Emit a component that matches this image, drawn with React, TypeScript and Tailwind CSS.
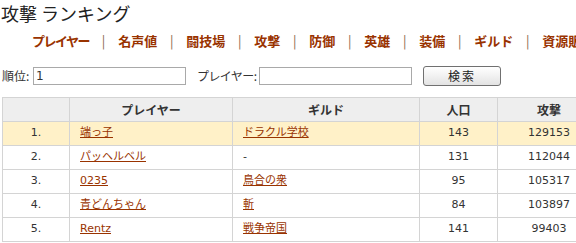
import React from 'react';

const navItems = ['プレイヤー', '名声値', '闘技場', '攻撃', '防御', '英雄', '装備', 'ギルド', '資源販売'];

const rows = [
  { rank: '1.', player: '端っ子', guild: 'ドラクル学校', pop: 143, attack: 129153 },
  { rank: '2.', player: 'パッヘルベル', guild: null, pop: 131, attack: 112044 },
  { rank: '3.', player: '0235', guild: '鳥合の衆', pop: 95, attack: 105317 },
  { rank: '4.', player: '青どんちゃん', guild: '斬', pop: 84, attack: 103897 },
  { rank: '5.', player: 'Rentz', guild: '戦争帝国', pop: 141, attack: 99403 },
];

function App() {
  return (
    <div className="w-[576px] h-[243px] overflow-hidden bg-white text-[#333] font-['Noto_Sans_CJK_JP',sans-serif]">
      {/* Title */}
      <h1 className="pl-[1px] pt-[2px] h-[33px] text-[18px] leading-[22px] font-normal text-[#222]">
        攻撃 ランキング
      </h1>

      {/* Nav */}
      <nav className="flex items-center h-[16px] pl-[32px] whitespace-nowrap text-[13px] leading-[16px] font-bold text-[#993300]">
        {navItems.map((item, i) => (
          <React.Fragment key={item}>
            {i > 0 && <span className="w-[29px] shrink-0 text-center font-normal text-[#8a6448]">|</span>}
            <a href="#" className={`shrink-0 ${i === 0 ? 'tracking-[-1.5px]' : ''}`}>{item}</a>
          </React.Fragment>
        ))}
      </nav>

      {/* Search */}
      <div className="flex items-center h-[20px] mt-[17px] text-[12px] whitespace-nowrap">
        <span className="w-[33px] pl-[2px] shrink-0">順位:</span>
        <input
          defaultValue="1"
          className="w-[153px] h-[18px] shrink-0 border border-[#a9a9a9] px-[2px] text-[12px] font-['DejaVu_Sans',sans-serif] outline-none"
        />
        <span className="w-[62px] ml-[11px] shrink-0 tracking-[-0.6px]">プレイヤー:</span>
        <input className="w-[153px] h-[18px] shrink-0 border border-[#a9a9a9] px-[2px] text-[12px] outline-none" />
        <button className="ml-[11px] w-[78px] h-[20px] shrink-0 rounded-[3px] border border-[#707070] bg-gradient-to-b from-white to-[#e3e3e3] text-[12px] leading-[18px] tracking-[2px] text-[#222]">
          検索
        </button>
      </div>

      {/* Table */}
      <table className="mt-[11px] ml-[2px] w-[598px] border-collapse table-fixed text-[11px] font-['DejaVu_Sans','Noto_Sans_CJK_JP',sans-serif]">
        <colgroup>
          <col className="w-[67px]" />
          <col className="w-[163px]" />
          <col className="w-[187px]" />
          <col className="w-[78px]" />
          <col className="w-[103px]" />
        </colgroup>
        <thead>
          <tr className="h-[24px] bg-[#eeeeee] text-[12px] font-bold font-['Noto_Sans_CJK_JP',sans-serif] text-[#333]">
            <th className="border border-[#d4d4d4]"></th>
            <th className="border border-[#d4d4d4]">プレイヤー</th>
            <th className="border border-[#d4d4d4]">ギルド</th>
            <th className="border border-[#d4d4d4]">人口</th>
            <th className="border border-[#d4d4d4]">攻撃</th>
          </tr>
        </thead>
        <tbody>
          {rows.map((r, i) => (
            <tr key={r.rank} className={`h-[24px] ${i === 0 ? 'bg-[#fff1c8]' : 'bg-white'}`}>
              <td className="border border-[#d4d4d4] text-center">{r.rank}</td>
              <td className="border border-[#d4d4d4] pl-[10px]">
                <a href="#" className="text-[#993300] underline">{r.player}</a>
              </td>
              <td className="border border-[#d4d4d4] pl-[10px]">
                {r.guild ? <a href="#" className="text-[#993300] underline">{r.guild}</a> : '-'}
              </td>
              <td className="border border-[#d4d4d4] text-center">{r.pop}</td>
              <td className="border border-[#d4d4d4] text-center">{r.attack}</td>
            </tr>
          ))}
        </tbody>
      </table>
    </div>
  );
}

export default App;
